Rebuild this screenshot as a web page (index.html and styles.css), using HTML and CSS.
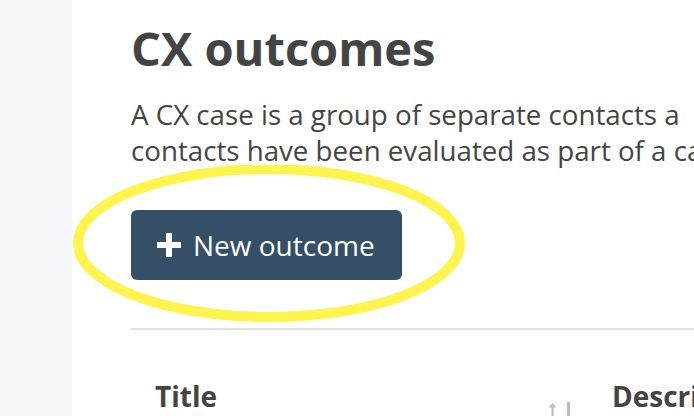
FILE: index.html
```html
<!DOCTYPE html>
<html lang="en">

<head>
    <meta charset="UTF-8">
    <title>CX outcomes</title>
    <link rel="stylesheet" href="styles.css">
</head>

<body>
    <div class="layout">
        <div class="sidebar"></div>
        <div class="main">
            <h1 class="page-title">CX outcomes</h1>
            <p class="intro">A CX case is a group of separate contacts a<br>contacts have been evaluated as part of a case.</p>
            <div class="actions">
                <button class="btn-primary">
                    <svg class="btn-icon" viewBox="0 0 24 24" width="24" height="24">
                        <path d="M9 0h6v9h9v6h-9v9H9v-9H0V9h9z" fill="#fff"/>
                    </svg>
                    New outcome
                </button>
                <svg class="highlight" viewBox="0 0 400 170" width="400" height="170">
                    <ellipse cx="200" cy="78" rx="191" ry="74" fill="none" stroke="#fff34d" stroke-width="10"/>
                </svg>
            </div>
            <div class="divider"></div>
            <div class="table-head">
                <div class="th th-title">
                    Title
                    <svg class="sort" viewBox="0 0 24 16" width="24" height="16">
                        <path d="M4.5 1L0.5 5.5h3v10.5h2V5.5h3z" fill="#bbb"/>
                        <rect x="19" y="0" width="3" height="16" fill="#bbb"/>
                    </svg>
                </div>
                <div class="th th-desc">Description</div>
            </div>
        </div>
    </div>
</body>

</html>
```

FILE: styles.css
```css
* {
    margin: 0;
    padding: 0;
    box-sizing: border-box;
}

body {
    font-family: "Open Sans", "Noto Sans", sans-serif;
    color: #444;
    background: #fff;
    overflow: hidden;
}

.layout {
    display: flex;
    height: 416px;
}

.sidebar {
    width: 72px;
    flex: none;
    background: #f5f6fa;
}

.main {
    flex: 1;
    padding: 20px 0 0 59px;
    white-space: nowrap;
    overflow: hidden;
}

.page-title {
    font-size: 47px;
    font-weight: 700;
    line-height: 56px;
    color: #444;
}

.intro {
    margin-top: 20px;
    font-size: 27.7px;
    line-height: 36px;
    color: #444;
}

.actions {
    position: relative;
    margin-top: 42px;
}

.btn-primary {
    display: inline-flex;
    align-items: center;
    gap: 12px;
    height: 70px;
    padding: 0 27px 0 26px;
    background: #354f67;
    color: #fff;
    border: none;
    border-radius: 6px;
    font-family: inherit;
    font-size: 28px;
}

.highlight {
    position: absolute;
    left: -62px;
    top: -45px;
    pointer-events: none;
    filter: blur(0.6px);
}

.divider {
    margin-top: 48px;
    height: 2px;
    background: #dde1e6;
}

.table-head {
    display: flex;
    margin-top: 46px;
}

.th {
    font-size: 28px;
    font-weight: 700;
    line-height: 40px;
    color: #444;
}

.th-title {
    position: relative;
    width: 481px;
    flex: none;
    padding-left: 24px;
}

.sort {
    position: absolute;
    right: 40px;
    top: 26px;
}
```
